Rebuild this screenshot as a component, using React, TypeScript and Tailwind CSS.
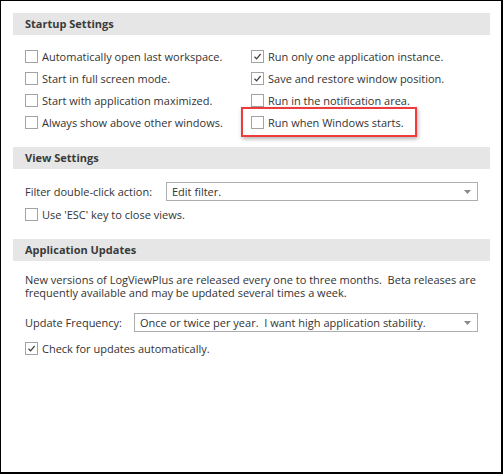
import React from 'react';

const font = { fontFamily: '"Open Sans", "Noto Sans", "Liberation Sans", sans-serif' };

function Checkbox({ checked }: { checked?: boolean }) {
  return (
    <span className="w-[13px] h-[13px] shrink-0 border border-[#a3a3a3] bg-white flex items-center justify-center">
      {checked && (
        <svg width="9" height="9" viewBox="0 0 9 9">
          <path d="M1.5 4.8 L3.6 6.8 L7.6 2" fill="none" stroke="#404040" strokeWidth="1.2" />
        </svg>
      )}
    </span>
  );
}

function CheckRow({ label, checked }: { label: string; checked?: boolean }) {
  return (
    <div className="h-[22px] flex items-center gap-[4px]">
      <Checkbox checked={checked} />
      <span className="leading-none whitespace-nowrap">{label}</span>
    </div>
  );
}

function SectionHeader({ title }: { title: string }) {
  return (
    <div className="h-[22px] bg-[#e6e6e6] flex items-center pl-3 font-bold text-[#3a3a3a]">
      {title}
    </div>
  );
}

function Dropdown({ value, className }: { value: string; className: string }) {
  return (
    <div className={`h-[19px] border border-[#adadad] bg-white flex items-center pl-[5px] pr-[6px] ${className}`}>
      <span className="flex-1 whitespace-pre leading-none">{value}</span>
      <svg width="7" height="4" viewBox="0 0 7 4">
        <path d="M0 0 H7 L3.5 4 Z" fill="#8a8a8a" />
      </svg>
    </div>
  );
}

export default function App() {
  return (
    <div
      style={font}
      className="w-[503px] h-[474px] bg-white border-l border-t border-r-2 border-b-2 border-black pt-3 pl-3 pr-[11px] text-[11px] text-[#333333]"
    >
      {/* Startup */}
      <SectionHeader title="Startup Settings" />
      <div className="mt-[10px] pl-3 grid grid-cols-[226px_1fr]">
        <CheckRow label="Automatically open last workspace." />
        <CheckRow label="Run only one application instance." checked />
        <CheckRow label="Start in full screen mode." />
        <CheckRow label="Save and restore window position." checked />
        <CheckRow label="Start with application maximized." />
        <CheckRow label="Run in the notification area." />
        <CheckRow label="Always show above other windows." />
        <div className="relative">
          <CheckRow label="Run when Windows starts." />
          <div className="absolute -left-[10px] -top-[4px] w-[176px] h-[30px] border-2 border-[#ee3b3b] shadow-[1px_2px_4px_rgba(0,0,0,0.3)] pointer-events-none" />
        </div>
      </div>

      {/* View */}
      <div className="mt-[14px]">
        <SectionHeader title="View Settings" />
      </div>
      <div className="pl-3 mt-[13px] flex items-center">
        <span className="w-[141px] whitespace-nowrap leading-none">Filter double-click action:</span>
        <Dropdown value="Edit filter." className="w-[312px]" />
      </div>
      <div className="pl-3 mt-[2px]">
        <CheckRow label="Use 'ESC' key to close views." />
      </div>

      {/* Updates */}
      <div className="mt-[14px]">
        <SectionHeader title="Application Updates" />
      </div>
      <p className="pl-3 pr-2 mt-[12px] leading-[13px]">
        New versions of LogViewPlus are released every one to three months.&nbsp; Beta releases are frequently available and may be updated several times a week.
      </p>
      <div className="pl-3 mt-[14px] flex items-center">
        <span className="w-[109px] whitespace-nowrap leading-none">Update Frequency:</span>
        <Dropdown value="Once or twice per year.  I want high application stability." className="w-[344px]" />
      </div>
      <div className="pl-3 mt-[5px]">
        <CheckRow label="Check for updates automatically." checked />
      </div>
    </div>
  );
}
